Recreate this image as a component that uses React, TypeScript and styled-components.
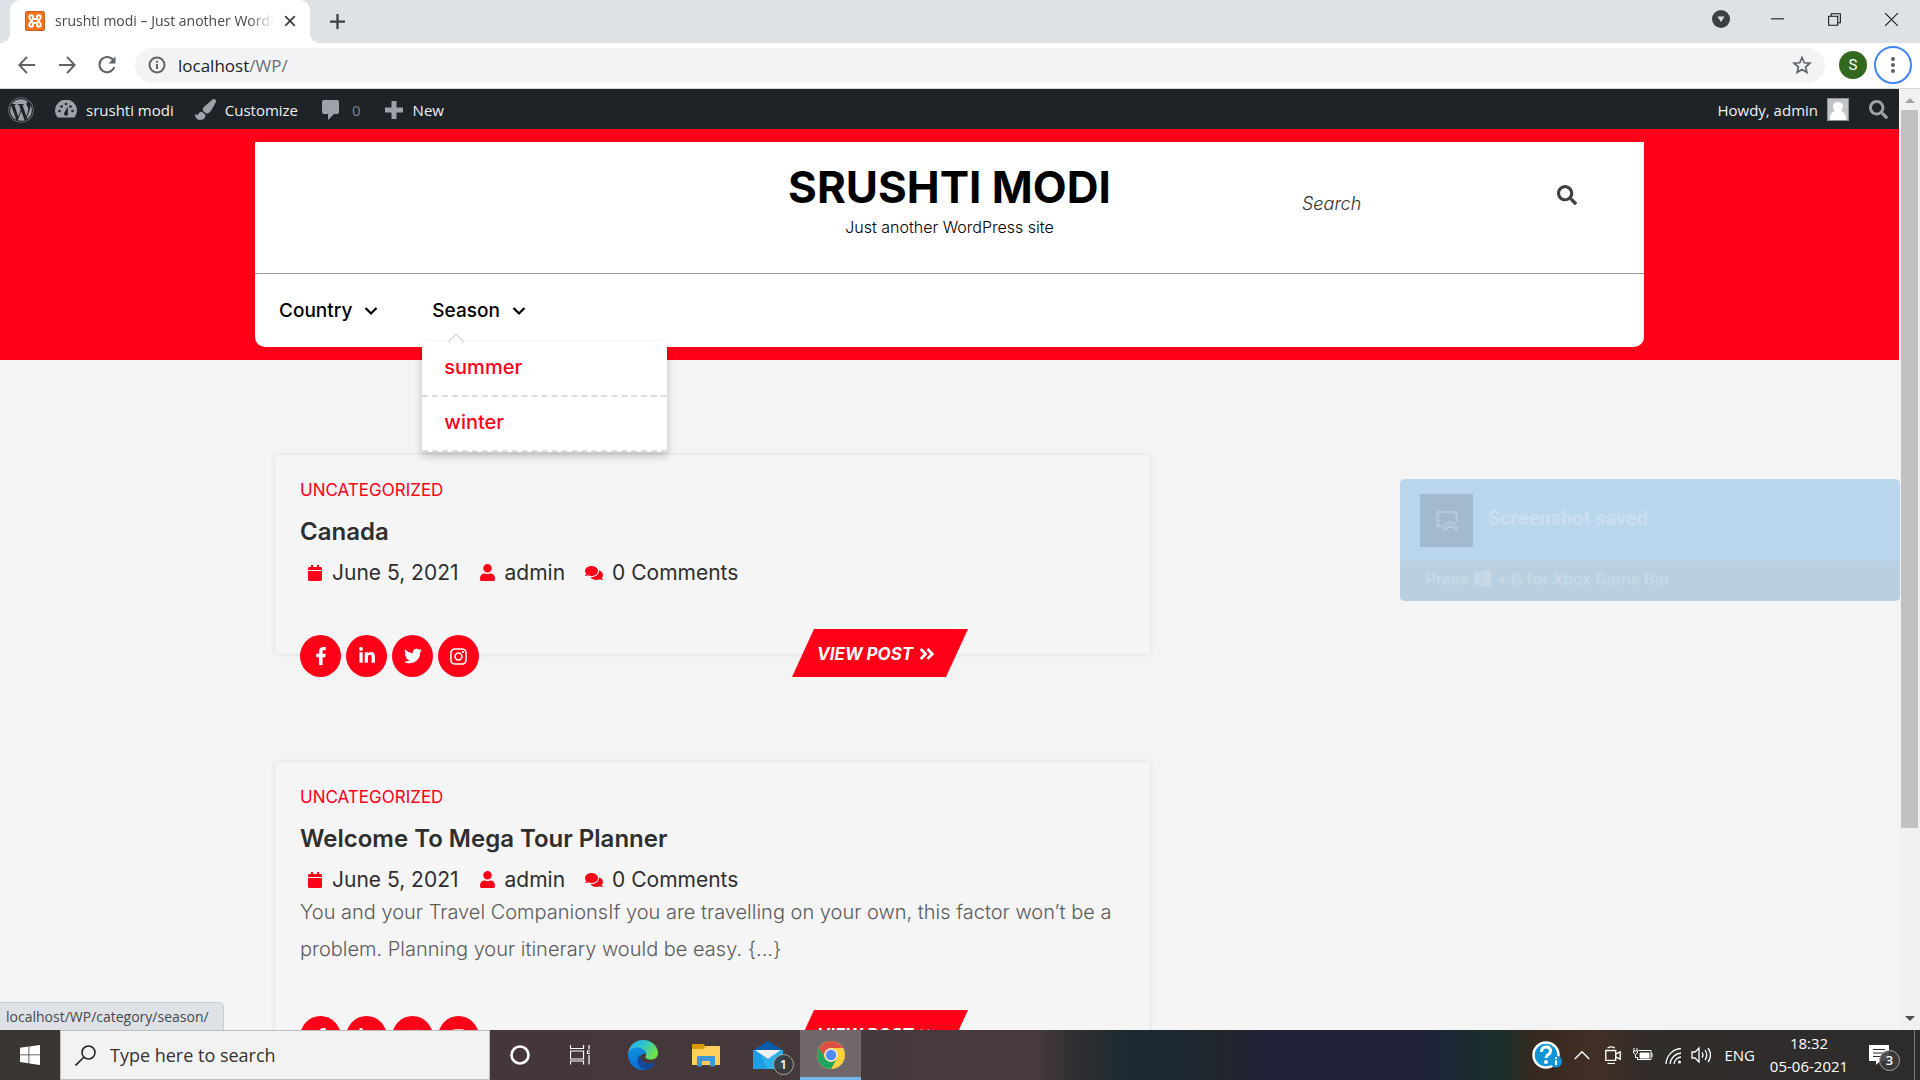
import React, { useState } from "react";
import styled, { createGlobalStyle, css } from "styled-components";
import {
  FaCalendar,
  FaUser,
  FaComments,
  FaFacebookF,
  FaLinkedinIn,
  FaTwitter,
  FaInstagram,
  FaAngleDoubleRight,
  FaPaintBrush,
  FaSearch,
  FaWordpress,
} from "react-icons/fa";

const RED = "#ff0018";
const system = `"Open Sans", "Noto Sans", sans-serif`;
const theme = `Inter, "Open Sans", sans-serif`;

const Global = createGlobalStyle`
  *, *::before, *::after { box-sizing: border-box; }
  body { margin: 0; background: #f4f4f4; font-family: ${system}; overflow: hidden; }
  button, input { font: inherit; color: inherit; border: 0; padding: 0; background: none; }
  h1, h2, p, ul { margin: 0; padding: 0; }
  ul { list-style: none; }
  a { color: inherit; text-decoration: none; }
  svg { display: block; flex-shrink: 0; }
`;

const Desktop = styled.div`
  height: 100vh;
  display: flex;
  flex-direction: column;
`;

/* Browser chrome */
const TabStrip = styled.div`
  height: 43px;
  background: #dee1e6;
  display: flex;
  justify-content: space-between;
  padding-left: 10px;
  flex-shrink: 0;
`;
const TabGroup = styled.div`
  display: flex;
  align-items: center;
  gap: 20px;
`;
const Tab = styled.div`
  position: relative;
  width: 300px;
  height: 43px;
  background: #fff;
  border-radius: 10px 10px 0 0;
  display: flex;
  align-items: center;
  gap: 10px;
  padding: 0 14px 2px 15px;
  &::before, &::after {
    content: "";
    position: absolute;
    bottom: 0;
    width: 10px;
    height: 10px;
  }
  &::before {
    left: -10px;
    background: radial-gradient(circle at 0 0, transparent 10px, #fff 10px);
  }
  &::after {
    right: -10px;
    background: radial-gradient(circle at 100% 0, transparent 10px, #fff 10px);
  }
`;
const TabTitle = styled.span`
  flex: 1;
  min-width: 0;
  font-size: 14px;
  color: #45484d;
  white-space: nowrap;
  overflow: hidden;
  mask-image: linear-gradient(90deg, #000 88%, transparent);
`;
const IconButton = styled.button`
  display: flex;
  align-items: center;
  justify-content: center;
  color: #3c4043;
`;
const WindowButtons = styled.div`
  display: flex;
  height: 38px;
`;
const WindowButton = styled(IconButton)`
  width: 57px;
  color: #111;
`;
const Toolbar = styled.div`
  height: 46px;
  background: #fff;
  border-bottom: 1px solid #d5d7da;
  display: flex;
  align-items: center;
  gap: 12px;
  padding: 0 8px 1px 15px;
  flex-shrink: 0;
`;
const NavButtons = styled.div`
  display: flex;
  gap: 16px;
  color: #5f6368;
  margin-right: 4px;
`;
const NavButton = styled(IconButton)`
  width: 24px;
  height: 24px;
  color: #5f6368;
`;
const AddressBar = styled.div`
  flex: 1;
  height: 35px;
  border-radius: 18px;
  background: #f1f3f4;
  display: flex;
  align-items: center;
  gap: 12px;
  padding: 0 13px;
  color: #5f6368;
`;
const Address = styled.a`
  flex: 1;
  font-size: 17px;
  color: #6b6f74;
  b { font-weight: 400; color: #202124; }
`;
const Profile = styled.button`
  width: 28px;
  height: 28px;
  border-radius: 50%;
  background: #33691e;
  color: #fff;
  font: 15px Roboto, sans-serif;
  margin-left: 2px;
`;
const MenuButton = styled(IconButton)`
  width: 38px;
  height: 38px;
  border: 2px solid #4285f4;
  border-radius: 50%;
  margin-left: -5px;
`;

/* Page */
const Viewport = styled.div`
  position: relative;
  flex: 1;
  min-height: 0;
  display: flex;
  overflow: hidden;
`;
const Page = styled.div`
  flex: 1;
  min-width: 0;
  overflow: hidden;
`;
const Scrollbar = styled.div`
  width: 21px;
  background: #f1f1f1;
  display: flex;
  flex-direction: column;
  align-items: center;
  justify-content: space-between;
  padding: 9px 2px;
`;
const Thumb = styled.div`
  width: 17px;
  height: 718px;
  background: #c1c1c1;
  margin: 7px 0 auto;
`;
const Arrow = styled.span<{ $down?: boolean }>`
  border: 5px solid transparent;
  ${(p) =>
    p.$down
      ? css`border-top-color: #505050; border-bottom: 0;`
      : css`border-bottom-color: #a3a3a3; border-top: 0;`}
`;
const AdminBar = styled.nav`
  height: 40px;
  background: #1d2327;
  color: #f0f0f1;
  display: flex;
  align-items: center;
  justify-content: space-between;
  padding: 1px 11px 0 8px;
  font-size: 15px;
`;
const AdminGroup = styled.div<{ $gap: number }>`
  display: flex;
  align-items: center;
  gap: ${(p) => p.$gap}px;
`;
const AdminLink = styled.a<{ $muted?: boolean }>`
  display: flex;
  align-items: center;
  gap: ${(p) => (p.$muted ? 11 : 9)}px;
  padding: 0 ${(p) => (p.$muted ? 2 : 0)}px;
  color: ${(p) => (p.$muted ? "#7f8488" : "#f0f0f1")};
  svg { color: #9ca2a7; }
`;
const Avatar = styled.span`
  width: 22px;
  height: 23px;
  border: 1px solid #8c8f94;
  background: #c3c4c6;
  overflow: hidden;
`;
const Banner = styled.header`
  background: ${RED};
  padding: 13px 0;
  font-family: ${theme};
`;
const Container = styled.div`
  width: min(1389px, 94%);
  margin: 0 auto;
`;
const HeaderCard = styled(Container)`
  background: #fff;
  border-radius: 0 0 10px 10px;
`;
const BrandRow = styled.div`
  height: 132px;
  display: grid;
  grid-template-columns: 1fr auto 1fr;
  border-bottom: 1px solid #999;
`;
const Brand = styled.div`
  grid-column: 2;
  text-align: center;
  padding-top: 19px;
  color: #000;
`;
const SiteTitle = styled.h1`
  font-size: 44px;
  line-height: 52px;
  font-weight: 700;
  white-space: nowrap;
`;
const Tagline = styled.p`
  font-size: 16px;
  line-height: 28px;
  font-weight: 300;
`;
const SearchForm = styled.form`
  display: flex;
  align-items: flex-start;
  justify-content: space-between;
  width: 275px;
  height: 81px;
  justify-self: end;
  margin-right: 67px;
  padding-top: 43px;
`;
const SearchInput = styled.input`
  width: 200px;
  height: 36px;
  outline: 0;
  font-size: 18px;
  font-weight: 300;
  font-style: italic;
  &::placeholder { color: #333; opacity: 1; }
`;
const MainNav = styled.ul`
  height: 73px;
  display: flex;
  align-items: center;
  gap: 54px;
  padding-left: 24px;
  font-size: 19px;
  font-weight: 500;
  color: #000;
`;
const NavItem = styled.li`
  position: relative;
`;
const NavLink = styled.a`
  display: flex;
  align-items: center;
  gap: 12px;
`;
const SubMenu = styled.ul`
  position: absolute;
  z-index: 2;
  left: -10px;
  top: 43px;
  width: 245px;
  background: #fff;
  color: ${RED};
  font-size: 20px;
  box-shadow: 0 4px 8px rgba(0, 0, 0, 0.22);
  &::before {
    content: "";
    position: absolute;
    left: 28px;
    top: -6px;
    width: 12px;
    height: 12px;
    background: #fff;
    border: solid #bbb;
    border-width: 1px 0 0 1px;
    transform: rotate(45deg);
    clip-path: polygon(0 0, 100% 0, 0 100%);
  }
`;
const SubItem = styled.li`
  height: 55px;
  line-height: 51px;
  padding-left: 22px;
  border-bottom: 2px dashed #ddd;
`;
const Posts = styled.main`
  padding: 95px 20px 0;
  display: flex;
  flex-direction: column;
  gap: 108px;
  font-family: ${theme};
  color: #2e2e2e;
`;
const Post = styled.article<{ $tall?: boolean }>`
  width: min(875px, 100%);
  height: ${(p) => (p.$tall ? 273 : 199)}px;
  display: flex;
  flex-direction: column;
  flex-shrink: 0;
  padding: 20px 25px 0;
  background: #f5f5f5;
  box-shadow: 0 0 5px rgba(0, 0, 0, 0.1);
`;
const Category = styled.a`
  font-size: 17px;
  line-height: 30px;
  color: ${RED};
  text-transform: uppercase;
`;
const PostTitle = styled.h2`
  font-size: 24px;
  line-height: 53px;
  font-weight: 600;
`;
const Meta = styled.div`
  display: flex;
  gap: 20px;
  padding-left: 7px;
  font-size: 21px;
  line-height: 29px;
`;
const MetaItem = styled.span`
  display: flex;
  align-items: center;
  gap: 9px;
  svg { color: ${RED}; }
`;
const Excerpt = styled.p`
  font-size: 20px;
  line-height: 37px;
  font-weight: 300;
  color: #5c5c5c;
`;
const PostFooter = styled.div`
  display: flex;
  align-items: flex-end;
  margin: auto 0 -23px;
`;
const Socials = styled.div`
  display: flex;
  gap: 5px;
  flex: 0 0 492px;
`;
const Social = styled.a`
  width: 41px;
  height: 42px;
  border-radius: 50%;
  background: ${RED};
  color: #fff;
  display: flex;
  align-items: center;
  justify-content: center;
`;
const ViewPost = styled.a`
  width: 176px;
  height: 48px;
  display: flex;
  align-items: center;
  gap: 5px;
  padding: 1px 0 0 25px;
  background: ${RED};
  clip-path: polygon(22px 0, 100% 0, calc(100% - 22px) 100%, 0 100%);
  color: #fff;
  font-size: 17px;
  font-weight: 700;
  font-style: italic;
  white-space: nowrap;
`;
const StatusBubble = styled.div`
  position: absolute;
  left: 0;
  bottom: 0;
  height: 28px;
  padding: 0 14px 0 6px;
  border: 1px solid #c9ccd1;
  border-width: 1px 1px 0 0;
  border-radius: 0 5px 0 0;
  background: #dee1e6;
  color: #45484d;
  font-size: 14px;
  line-height: 28px;
`;

/* Game bar notification */
const Toast = styled.aside`
  position: absolute;
  right: 20px;
  top: 390px;
  width: 500px;
  border-radius: 5px;
  overflow: hidden;
  background: #bad6ed;
  color: #cbdff2;
  font-family: Roboto, sans-serif;
`;
const ToastBody = styled.div`
  display: flex;
  align-items: flex-start;
  gap: 15px;
  height: 82px;
  padding: 15px 20px;
`;
const ToastIcon = styled.span`
  width: 53px;
  height: 53px;
  background: #a2b9cf;
  display: flex;
  align-items: center;
  justify-content: center;
`;
const ToastTitle = styled.strong`
  font-size: 20px;
  line-height: 48px;
`;
const ToastHint = styled.div`
  height: 40px;
  display: flex;
  align-items: center;
  gap: 6px;
  padding: 0 0 5px 25px;
  background: #bacfe0;
  color: #c9dae6;
  font-size: 17px;
  font-weight: 500;
`;

/* Taskbar */
const Taskbar = styled.footer`
  height: 50px;
  flex-shrink: 0;
  display: flex;
  justify-content: space-between;
  color: #fff;
  background: linear-gradient(90deg, #3a3633 0, #453639 26%, #453a3b 45%, #473a3c 54%, #2f2e30 56%, #1b2a32 59%, #22262e 64%, #20223a 67%, #20223a 74%, #1b2a32 76%, #1c2e2a 78%, #36291f 80%, #422f27 83%, #302d2b 86%, #2e2c2b 100%);
`;
const TaskGroup = styled.div`
  display: flex;
  align-items: center;
`;
const TaskButton = styled.button<{ $w: number; $active?: boolean }>`
  width: ${(p) => p.$w}px;
  height: 50px;
  display: flex;
  align-items: center;
  justify-content: center;
  ${(p) =>
    p.$active &&
    css`
      background: #70676a;
      box-shadow: inset 0 -3px #76b9ed;
    `}
`;
const TaskSearch = styled.label`
  width: 430px;
  height: 50px;
  display: flex;
  align-items: center;
  gap: 14px;
  padding-left: 14px;
  background: #f2f2f2;
  border: 1px solid #bdbdbd;
  color: #222;
`;
const TaskInput = styled.input`
  flex: 1;
  font-size: 18px;
  outline: 0;
  &::placeholder { color: #333; opacity: 1; }
`;
const BadgeHolder = styled.span`
  position: relative;
`;
const Badge = styled.span`
  position: absolute;
  right: -11px;
  bottom: -6px;
  width: 21px;
  height: 21px;
  border: 1px solid #a5a5a5;
  border-radius: 50%;
  background: #3a3a3ae0;
  font-size: 13px;
  line-height: 19px;
  font-weight: 600;
  text-align: center;
`;
const Clock = styled.div`
  width: 86px;
  margin: 0 8px 0 11px;
  text-align: center;
  font-size: 15px;
  line-height: 23px;
`;
const Lang = styled.span`
  margin-left: 10px;
  font-size: 15px;
`;
const ShowDesktop = styled.button`
  width: 6px;
  height: 50px;
  border-left: 1px solid #777;
`;

const Windows = ({ size }: { size: number }) => (
  <svg width={size} height={size} viewBox="0 0 20 20" fill="currentColor" aria-hidden>
    <path d="M0 2.8 8.5 1.6v7.9H0zM9.3 1.5 20 0v9.5H9.3zM0 10.3h8.5v8L0 17.1zM9.3 10.3H20V20L9.3 18.5z" />
  </svg>
);

const Line = ({ size = 20, d, w = 2 }: { size?: number; d: string; w?: number }) => (
  <svg width={size} height={size} viewBox="0 0 20 20" fill="none" stroke="currentColor" strokeWidth={w} aria-hidden>
    <path d={d} />
  </svg>
);

const Chevron = () => (
  <svg width="14" height="10" viewBox="0 0 14 10" fill="none" stroke="currentColor" strokeWidth="2.2" aria-hidden>
    <path d="M1.500 2 7 7.500 12.500 2" />
  </svg>
);

type PostData = { title: string; excerpt?: string };
const posts: PostData[] = [
  { title: "Canada" },
  {
    title: "Welcome To Mega Tour Planner",
    excerpt:
      "You and your Travel CompanionsIf you are travelling on your own, this factor won’t be a problem. Planning your itinerary would be easy. {...}",
  },
];

const PostCard = ({ title, excerpt }: PostData) => (
  <Post $tall={!!excerpt}>
    <Category href="#category">Uncategorized</Category>
    <PostTitle><a href="#post">{title}</a></PostTitle>
    <Meta>
      <MetaItem><FaCalendar size={16} />June 5, 2021</MetaItem>
      <MetaItem><FaUser size={17} />admin</MetaItem>
      <MetaItem><FaComments size={18} />0 Comments</MetaItem>
    </Meta>
    {excerpt && <Excerpt>{excerpt}</Excerpt>}
    <PostFooter>
      <Socials>
        <Social href="#facebook" aria-label="Facebook"><FaFacebookF size={18} /></Social>
        <Social href="#linkedin" aria-label="LinkedIn"><FaLinkedinIn size={18} /></Social>
        <Social href="#twitter" aria-label="Twitter"><FaTwitter size={18} /></Social>
        <Social href="#instagram" aria-label="Instagram"><FaInstagram size={19} /></Social>
      </Socials>
      <ViewPost href="#post">VIEW POST <FaAngleDoubleRight size={18} /></ViewPost>
    </PostFooter>
  </Post>
);

export default function App() {
  const [query, setQuery] = useState("");
  const [taskQuery, setTaskQuery] = useState("");
  return (
    <Desktop>
      <Global />
      <TabStrip>
        <TabGroup>
          <Tab>
            <svg width="20" height="20" viewBox="0 0 20 20" aria-hidden>
              <rect x="0.5" y="0.5" width="19" height="19" rx="1.5" fill="#f2731d" stroke="#c9611f" />
              <path d="M5.500 8.500C3 6 4.500 4 6.500 4.300 8.500 4.500 8 6.500 8 8h4c0-1.500-.5-3.500 1.500-3.700 2-.3 3.500 1.700 1 4.200L13 10l1.500 1.500c2.500 2.500 1 4.500-1 4.200-2-.2-1.500-2.200-1.500-3.700H8c0 1.500.5 3.500-1.500 3.700-2 .3-3.500-1.700-1-4.200L7 10z" fill="none" stroke="#fff" strokeWidth="2" strokeLinejoin="round" />
            </svg>
            <TabTitle>srushti modi – Just another WordPress site</TabTitle>
            <IconButton aria-label="Close tab"><Line size={12} w={3} d="M2 2l16 16M18 2 2 18" /></IconButton>
          </Tab>
          <IconButton aria-label="New tab"><Line size={15} w={3} d="M10 0v20M0 10h20" /></IconButton>
        </TabGroup>
        <WindowButtons>
          <WindowButton aria-label="Tab search">
            <svg width="18" height="18" viewBox="0 0 18 18" aria-hidden>
              <circle cx="9" cy="9" r="9" fill="#3c4043" />
              <path d="M5.500 6.500h7L9 12z" fill="#dee1e6" />
            </svg>
          </WindowButton>
          <WindowButton aria-label="Minimize"><Line size={13} w={1.6} d="M0 9h20" /></WindowButton>
          <WindowButton aria-label="Restore"><Line size={13} w={1.6} d="M1 5h14v14H1zM5 5V1h14v14h-4" /></WindowButton>
          <WindowButton aria-label="Close"><Line size={13} w={1.6} d="M0 0l20 20M20 0 0 20" /></WindowButton>
        </WindowButtons>
      </TabStrip>
      <Toolbar>
        <NavButtons>
          <NavButton aria-label="Back"><Line size={18} w={2.2} d="M19 10H2M10 1 1.500 10l8.500 9" /></NavButton>
          <NavButton aria-label="Forward"><Line size={18} w={2.2} d="M1 10h17M10 1l8.500 9-8.500 9" /></NavButton>
          <NavButton aria-label="Reload">
            <svg width="20" height="20" viewBox="0 0 20 20" fill="none" stroke="currentColor" strokeWidth="2" aria-hidden>
              <path d="M16.500 5.500A7.600 7.600 0 1 0 17.300 12" />
              <path d="M18.500 1.500v7h-7z" fill="currentColor" stroke="none" />
            </svg>
          </NavButton>
        </NavButtons>
        <AddressBar>
          <svg width="18" height="18" viewBox="0 0 18 18" fill="none" stroke="currentColor" strokeWidth="2" aria-hidden>
            <circle cx="9" cy="9" r="7.5" />
            <path d="M9 8v5M9 4.800v2" />
          </svg>
          <Address href="#home"><b>localhost</b>/WP/</Address>
          <IconButton aria-label="Bookmark">
            <svg width="20" height="20" viewBox="0 0 24 24" fill="none" stroke="#5f6368" strokeWidth="2" aria-hidden>
              <path d="M12 3l2.700 6.300 6.800.6-5.200 4.500 1.600 6.600-5.900-3.500L6.100 21l1.600-6.600L2.500 9.900l6.800-.6z" />
            </svg>
          </IconButton>
        </AddressBar>
        <Profile aria-label="Profile">S</Profile>
        <MenuButton aria-label="Menu">
          <svg width="4" height="18" viewBox="0 0 4 18" fill="#5f6368" aria-hidden>
            <circle cx="2" cy="3" r="2" /><circle cx="2" cy="9" r="2" /><circle cx="2" cy="15" r="2" />
          </svg>
        </MenuButton>
      </Toolbar>

      <Viewport>
        <Page>
          <AdminBar>
            <AdminGroup $gap={21}>
              <AdminLink href="#wp" aria-label="About WordPress"><FaWordpress size={26} /></AdminLink>
              <AdminLink href="#site">
                <svg width="22" height="20" viewBox="0 0 22 20" aria-hidden>
                  <path d="M2.500 17.500A11 11 0 1 1 19.500 17.500z" fill="currentColor" />
                  <g fill="#1d2327">
                    <circle cx="4.500" cy="11" r="1.300" /><circle cx="6.500" cy="6.500" r="1.300" /><circle cx="11" cy="4" r="1.300" />
                    <circle cx="15.500" cy="6.500" r="1.300" /><circle cx="17.500" cy="11" r="1.300" />
                    <path d="M12.800 6.500 13 14a2 2 0 1 1-3.500-1.500z" />
                  </g>
                </svg>
                srushti modi
              </AdminLink>
              <AdminLink href="#customize">
                <FaPaintBrush size={21} />
                Customize
              </AdminLink>
              <AdminLink href="#comments" $muted>
                <svg width="20" height="20" viewBox="0 0 20 20" fill="currentColor" aria-hidden>
                  <path d="M3 0h13q2 0 2 2v10q0 2-2 2h-3l-6 6v-6H3q-2 0-2-2V2q0-2 2-2z" />
                </svg>
                0
              </AdminLink>
              <AdminLink href="#new">
                <svg width="20" height="18" viewBox="0 0 20 18" fill="none" stroke="currentColor" strokeWidth="5" aria-hidden>
                  <path d="M10 0v18M1 9h18" />
                </svg>
                New
              </AdminLink>
            </AdminGroup>
            <AdminGroup $gap={20}>
              <AdminLink href="#profile">
                Howdy, admin
                <Avatar>
                  <svg width="20" height="21" viewBox="0 0 20 21" aria-hidden>
                    <path d="M10 3c6 0 6 6 3 9 4 1 5 4 5 9H2c0-5 1-8 5-9-3-3-3-9 3-9z" fill="#fff" />
                  </svg>
                </Avatar>
              </AdminLink>
              <AdminLink as="button" aria-label="Search"><FaSearch size={19} /></AdminLink>
            </AdminGroup>
          </AdminBar>
          <Banner>
            <HeaderCard>
              <BrandRow>
                <Brand>
                  <SiteTitle>SRUSHTI MODI</SiteTitle>
                  <Tagline>Just another WordPress site</Tagline>
                </Brand>
                <SearchForm onSubmit={(e) => e.preventDefault()}>
                  <SearchInput aria-label="Search" placeholder="Search" value={query} onChange={(e) => setQuery(e.target.value)} />
                  <IconButton aria-label="Submit search"><FaSearch size={20} /></IconButton>
                </SearchForm>
              </BrandRow>
              <MainNav>
                <NavItem><NavLink href="#country">Country <Chevron /></NavLink></NavItem>
                <NavItem>
                  <NavLink href="#season">Season <Chevron /></NavLink>
                  <SubMenu>
                    <SubItem><a href="#summer">summer</a></SubItem>
                    <SubItem><a href="#winter">winter</a></SubItem>
                  </SubMenu>
                </NavItem>
              </MainNav>
            </HeaderCard>
          </Banner>
          <Container>
            <Posts>{posts.map((p) => <PostCard key={p.title} {...p} />)}</Posts>
          </Container>
        </Page>
        <Scrollbar>
          <Arrow />
          <Thumb />
          <Arrow $down />
        </Scrollbar>
        <StatusBubble>localhost/WP/category/season/</StatusBubble>
        <Toast>
          <ToastBody>
            <ToastIcon>
              <svg width="22" height="20" viewBox="0 0 22 20" fill="none" stroke="#bccfe1" strokeWidth="1.4" aria-hidden>
                <path d="M7 15.500H1V1h20v9" />
                <path d="M3.500 2v13M18.500 2v7" strokeDasharray="2 1.5" />
                <path d="M11 11.500h7l3 5q.5 3-2 2l-2-2.500h-5l-2 2.500q-2.500 1-2-2zM13 14h1.500M16 14h1" />
              </svg>
            </ToastIcon>
            <ToastTitle>Screenshot saved</ToastTitle>
          </ToastBody>
          <ToastHint>Press <Windows size={17} /> + G for Xbox Game Bar</ToastHint>
        </Toast>
      </Viewport>

      <Taskbar>
        <TaskGroup>
          <TaskButton $w={60} aria-label="Start"><Windows size={20} /></TaskButton>
          <TaskSearch>
            <svg width="21" height="21" viewBox="0 0 21 21" fill="none" stroke="#222" strokeWidth="1.6" aria-hidden>
              <circle cx="13.500" cy="7.500" r="6.500" /><path d="M9 12 .5 20.500" />
            </svg>
            <TaskInput aria-label="Windows search" placeholder="Type here to search" value={taskQuery} onChange={(e) => setTaskQuery(e.target.value)} />
          </TaskSearch>
          <TaskButton $w={60} aria-label="Cortana">
            <svg width="20" height="20" viewBox="0 0 20 20" aria-hidden><circle cx="10" cy="10" r="8.5" fill="none" stroke="#fff" strokeWidth="2.6" /></svg>
          </TaskButton>
          <TaskButton $w={60} aria-label="Task view">
            <Line size={20} w={1.2} d="M.5 0v3.500h13V0M.5 6h13v8H.5zM.5 19.500V16h13v3.500M19 0v4.500M19 10v9.500M17.500 6h3v2.500h-3z" />
          </TaskButton>
          <TaskButton $w={66} aria-label="Edge">
            <svg width="30" height="30" viewBox="0 0 30 30" aria-hidden>
              <defs>
                <linearGradient id="eg" x1="0" y1="0" x2="1" y2="0.5">
                  <stop offset="0" stopColor="#2aa8ea" /><stop offset=".5" stopColor="#2fc4d0" /><stop offset="1" stopColor="#6fe04d" />
                </linearGradient>
                <linearGradient id="eb" x1="0" y1="0" x2="0" y2="1">
                  <stop offset="0" stopColor="#0f8fe0" /><stop offset="1" stopColor="#0a6fd0" />
                </linearGradient>
              </defs>
              <path d="M0 14C.5 6 7 0 15 0c9 0 15 6.500 15 13 0 4.500-3.500 6.500-7 6.500-4 0-6-1.500-5.500-3 1.500-1.500 1-6-4-7.500C7 8 1 11 0 14z" fill="url(#eg)" />
              <path d="M0 14c1-4 5-6.500 9.500-6.500 4 0 8 2.500 8.500 6.500-5-1-7 3-6 7 1 4.500 5 8 9 8-2 .8-4 1-6 1C6 30 0 23 0 14z" fill="url(#eb)" />
              <path d="M12 15c-5 5-2 14 6 14.700 4-.7 7.500-3 9.500-6.500.4-.8-.2-1.200-1-.8C20 25.500 12 22 12 15z" fill="#134a9c" />
            </svg>
          </TaskButton>
          <TaskButton $w={60} aria-label="File Explorer">
            <svg width="28" height="24" viewBox="0 0 28 24" aria-hidden>
              <path d="M0 2q0-1 1-1h10q1 0 1.500 1L14 4v4H0z" fill="#dd9b00" />
              <path d="M0 6h11l3-3h13q1 0 1 1v18H0z" fill="#fed05a" />
              <path d="M5 23.500V14.500Q5 13 6.500 13h15q1.500 0 1.500 1.500v9h-5V18H10v5.500z" fill="#3a96dd" />
            </svg>
          </TaskButton>
          <TaskButton $w={64} aria-label="Mail">
            <BadgeHolder>
              <svg width="30" height="28" viewBox="0 0 30 28" aria-hidden>
                <path d="M0 9 15 0l15 9z" fill="#0a5ba8" />
                <path d="M0 9h30v19H0z" fill="#1f9de5" />
                <path d="M2 9h26L15 18z" fill="#f0f0f0" />
                <path d="M30 9v19H14L8 14l7 4z" fill="#35bff0" opacity=".6" />
              </svg>
              <Badge>1</Badge>
            </BadgeHolder>
          </TaskButton>
          <TaskButton $w={61} $active aria-label="Chrome">
            <svg width="28" height="28" viewBox="0 0 28 28" aria-hidden>
              <circle cx="14" cy="14" r="14" fill="#fcd03e" />
              <path d="M1.900 7A14 14 0 0 1 26.100 7H14a7 7 0 0 0-6 10.500z" fill="#dd5144" />
              <path d="M1.900 7A14 14 0 0 0 14 28l6-10.500a7 7 0 0 1-12 0z" fill="#1ea362" />
              <circle cx="14" cy="14" r="6.500" fill="#f1f1f1" /><circle cx="14" cy="14" r="5.200" fill="#4c8bf5" />
            </svg>
          </TaskButton>
        </TaskGroup>
        <TaskGroup>
          <TaskButton $w={38} aria-label="Help">
            <svg width="30" height="28" viewBox="0 0 30 28" aria-hidden>
              <circle cx="14" cy="14" r="12.5" fill="#1295d8" stroke="#fff" strokeWidth="2.5" />
              <path d="M9.500 11q0-5 4.500-5t4.500 4q0 2-2.200 3.500T14 17" fill="none" stroke="#fff" strokeWidth="3" />
              <circle cx="14" cy="21" r="2" fill="#fff" />
              <circle cx="24" cy="20.500" r="6" fill="#1295d8" />
              <path d="M24 19v5M24 16v2" stroke="#fff" strokeWidth="2" />
            </svg>
          </TaskButton>
          <TaskButton $w={32} aria-label="Show hidden icons"><Line size={16} w={1.8} d="M1 15 10 6l9 9" /></TaskButton>
          <TaskButton $w={30} aria-label="Meet now"><Line size={18} w={1.5} d="M2 5h11v11H2zM13 9l5-2.500v8L13 12M4 2q4-2 8 0M4 19q4 1.500 8 0" /></TaskButton>
          <TaskButton $w={30} aria-label="Battery">
            <svg width="20" height="14" viewBox="0 0 20 14" fill="none" stroke="currentColor" aria-hidden>
              <path d="M5.500 2.500h12.500v9H4.500V9M19 5v4M1 0v3M4 0v3M.5 3h4v2L2.500 6.500.5 5zM2.500 7v2.500h2" />
              <path d="M7 5h9v5H7z" fill="currentColor" />
            </svg>
          </TaskButton>
          <TaskButton $w={30} aria-label="Network">
            <svg width="17" height="17" viewBox="0 0 17 17" fill="none" stroke="currentColor" strokeWidth="1.3" aria-hidden>
              <path d="M1 17A16 16 0 0 1 16 1.500M5 17A12 12 0 0 1 16 6M9 17a8 8 0 0 1 7-7" />
              <circle cx="14.500" cy="15" r="1.500" fill="currentColor" stroke="none" />
            </svg>
          </TaskButton>
          <TaskButton $w={26} aria-label="Volume"><Line size={20} w={1.3} d="M1 7h3l4-4v14l-4-4H1zM11 7.500q2 2.500 0 5M14 5q3.500 5 0 10M17 3q5 7 0 14" /></TaskButton>
          <Lang>ENG</Lang>
          <Clock>18:32<br />05-06-2021</Clock>
          <TaskButton $w={38} aria-label="Notifications">
            <BadgeHolder>
              <svg width="20" height="20" viewBox="0 0 20 20" aria-hidden>
                <path d="M0 0h20v16H11l-4 4v-4H0z" fill="#fff" />
                <path d="M4 4.500h12M4 8h12M4 11.500h8" stroke="#2e2c2b" strokeWidth="1.2" />
              </svg>
              <Badge>3</Badge>
            </BadgeHolder>
          </TaskButton>
          <TaskButton $w={16} tabIndex={-1} aria-hidden />
          <ShowDesktop aria-label="Show desktop" />
        </TaskGroup>
      </Taskbar>
    </Desktop>
  );
}
